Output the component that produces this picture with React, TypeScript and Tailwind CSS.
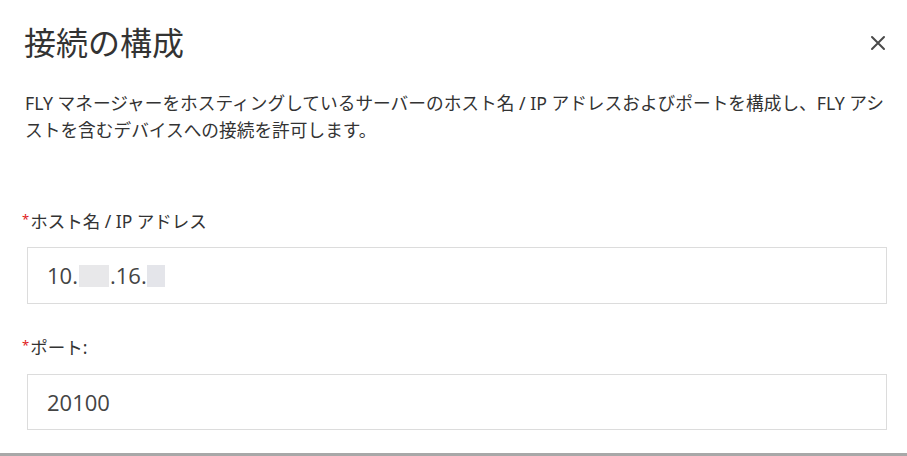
import React from 'react';

const jp = { fontFamily: '"Noto Sans", "Noto Sans CJK JP", sans-serif' };

const CloseIcon = () => (
  <svg width="16" height="16" viewBox="0 0 16 16" className="text-[#4a4a4a]">
    <path d="M2 2 L14 14 M14 2 L2 14" stroke="currentColor" strokeWidth="2" strokeLinecap="round" />
  </svg>
);

const Label = ({ children }: { children: React.ReactNode }) => (
  <label className="flex items-start text-[17.5px] leading-[26px] text-[#333333] ml-[-3px]">
    <span className="text-[#e02020] text-[13px] leading-[22px] mr-[1px]">*</span>
    {children}
  </label>
);

export default function App() {
  return (
    <div className="w-[907px] h-[456px] bg-white flex flex-col border-b-[3px] border-[#a8a8a8]" style={jp}>
      <div className="flex items-center justify-between pl-[24px] pr-[17px] pt-[22px]">
        <h1 className="text-[32px] leading-[42px] text-[#333333] font-normal">接続の構成</h1>
        <button className="p-1">
          <CloseIcon />
        </button>
      </div>

      <p className="pl-[25px] pr-[22px] mt-[26px] text-[17.7px] leading-[27px] text-[#333333]">
        FLY マネージャーをホスティングしているサーバーのホスト名 / IP アドレスおよびポートを構成し、FLY アシストを含むデバイスへの接続を許可します。
      </p>

      <div className="flex flex-col pl-[25px] pr-[20px] mt-[64px]">
        <Label>ホスト名 / IP アドレス</Label>
        <div className="mt-[13px] ml-[2px] h-[57px] border border-[#dcdcdc] flex items-center px-[19px] text-[22px] text-[#444444]" style={{ fontFamily: '"Open Sans", sans-serif' }}>
          <span>10.</span>
          <span className="inline-block w-[30px] h-[22px] bg-[#e8e8ea] mx-[1px]" />
          <span>.16.</span>
          <span className="inline-block w-[18px] h-[22px] bg-[#e4e5ea]" />
        </div>

        <div className="mt-[30px]">
          <Label>ポート:</Label>
        </div>
        <div className="mt-[14px] ml-[2px] h-[56px] border border-[#dcdcdc] flex items-center px-[19px] text-[22px] text-[#444444]" style={{ fontFamily: '"Open Sans", sans-serif' }}>
          20100
        </div>
      </div>
    </div>
  );
}
